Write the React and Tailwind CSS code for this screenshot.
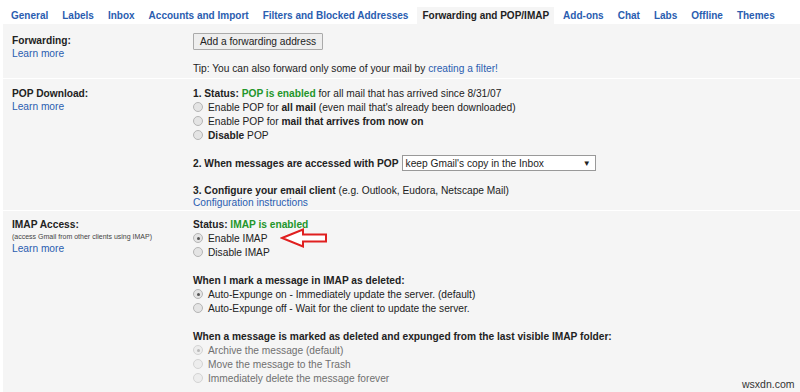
import React from 'react';

const font = { fontFamily: '"Liberation Sans", Arial, sans-serif' };

function Radio({ checked, disabled }) {
  return (
    <span
      className={`inline-block w-[10px] h-[10px] rounded-full border mr-[5px] shrink-0 relative ${
        disabled ? 'border-[#d4d4d4] bg-[#ededed]' : 'border-[#b5b5b5] bg-[#e4e4e4]'
      }`}
    >
      {checked && (
        <span
          className={`absolute left-[2.5px] top-[2.5px] w-[3px] h-[3px] rounded-full ${
            disabled ? 'bg-[#b8b8b8]' : 'bg-[#555]'
          }`}
        />
      )}
    </span>
  );
}

function Option({ checked, disabled, children }) {
  return (
    <div className={`flex items-center h-[14px] whitespace-nowrap ${disabled ? 'text-[#707070]' : ''}`}>
      <Radio checked={checked} disabled={disabled} />
      <span>{children}</span>
    </div>
  );
}

function LeftLabel({ title, note }) {
  return (
    <div className="w-[190px] shrink-0 pl-[9px]">
      <div className="font-bold leading-[13px]">{title}</div>
      {note && <div className="text-[7px] leading-[11px] text-[#444] whitespace-nowrap">{note}</div>}
      <div className="text-[#2a5db0] leading-[13px]">Learn more</div>
    </div>
  );
}

function Arrow() {
  return (
    <svg width="50" height="22" viewBox="0 0 50 22" className="absolute left-[87px] -top-[4px]">
      <path
        d="M2 11 L23 2.5 L23 7.5 L46 7.5 L46 14.5 L23 14.5 L23 19.5 Z"
        fill="#fff"
        stroke="#e02020"
        strokeWidth="2"
      />
    </svg>
  );
}

export default function App() {
  const tabs = [
    'General',
    'Labels',
    'Inbox',
    'Accounts and Import',
    'Filters and Blocked Addresses',
    'Forwarding and POP/IMAP',
    'Add-ons',
    'Chat',
    'Labs',
    'Offline',
    'Themes',
  ];
  return (
    <div className="relative w-[800px] h-[392px] bg-white overflow-hidden text-[10.2px] text-[#222]" style={font}>
      <div className="flex items-end h-[24px] pl-[6px] gap-[4px]">
        {tabs.map((t) => (
          <div
            key={t}
            className={`h-[17px] px-[5px] flex items-center font-bold text-[10px] whitespace-nowrap ${
              t === 'Forwarding and POP/IMAP' ? 'bg-[#f5f5f5] text-[#222]' : 'text-[#2a5db0]'
            }`}
          >
            {t}
          </div>
        ))}
      </div>

      <div className="ml-[3px] bg-[#f5f5f5] h-[368px]">
        {/* Forwarding */}
        <div className="flex pt-[9px] h-[55px] border-b border-white">
          <div className="pt-[1px]">
            <LeftLabel title="Forwarding:" />
          </div>
          <div>
            <div className="border border-[#aaa] bg-[#eee] rounded-[1px] h-[17px] px-[6px] flex items-center w-fit">
              Add a forwarding address
            </div>
            <div className="mt-[11px]">
              Tip: You can also forward only some of your mail by{' '}
              <span className="text-[#2a5db0]">creating a filter!</span>
            </div>
          </div>
        </div>

        {/* POP */}
        <div className="flex pt-[8px] h-[132px] border-b border-white">
          <LeftLabel title="POP Download:" />
          <div className="leading-[13px]">
            <div>
              <b>1. Status: </b>
              <b className="text-[#23962b]">POP is enabled</b> for all mail that has arrived since 8/31/07
            </div>
            <Option>
              Enable POP for <b>all mail</b> (even mail that's already been downloaded)
            </Option>
            <Option>
              Enable POP for <b>mail that arrives from now on</b>
            </Option>
            <Option>
              <b>Disable</b> POP
            </Option>
            <div className="flex items-center mt-[13px]">
              <b>2. When messages are accessed with POP</b>
              <div className="ml-[3px] w-[194px] h-[16px] border border-[#999] bg-white flex items-center justify-between pl-[3px] pr-[4px]">
                <span>keep Gmail's copy in the Inbox</span>
                <span className="text-[8px]">▼</span>
              </div>
            </div>
            <div className="mt-[13px]">
              <b>3. Configure your email client</b> (e.g. Outlook, Eudora, Netscape Mail)
            </div>
            <div className="text-[#2a5db0] leading-[12px]">Configuration instructions</div>
          </div>
        </div>

        {/* IMAP */}
        <div className="flex pt-[7px]">
          <LeftLabel title="IMAP Access:" note="(access Gmail from other clients using IMAP)" />
          <div className="leading-[13px]">
            <div>
              <b>Status: </b>
              <b className="text-[#23962b]">IMAP is enabled</b>
            </div>
            <div className="relative">
              <Option checked>Enable IMAP</Option>
              <Arrow />
            </div>
            <Option>Disable IMAP</Option>

            <div className="mt-[15px] font-bold">When I mark a message in IMAP as deleted:</div>
            <Option checked>Auto-Expunge on - Immediately update the server. (default)</Option>
            <Option>Auto-Expunge off - Wait for the client to update the server.</Option>

            <div className="mt-[15px] font-bold">
              When a message is marked as deleted and expunged from the last visible IMAP folder:
            </div>
            <Option checked disabled>Archive the message (default)</Option>
            <Option disabled>Move the message to the Trash</Option>
            <Option disabled>Immediately delete the message forever</Option>
          </div>
        </div>
      </div>
      <div className="absolute left-[742px] top-[377px] text-[10.5px] text-[#333]">wsxdn.com</div>
    </div>
  );
}
